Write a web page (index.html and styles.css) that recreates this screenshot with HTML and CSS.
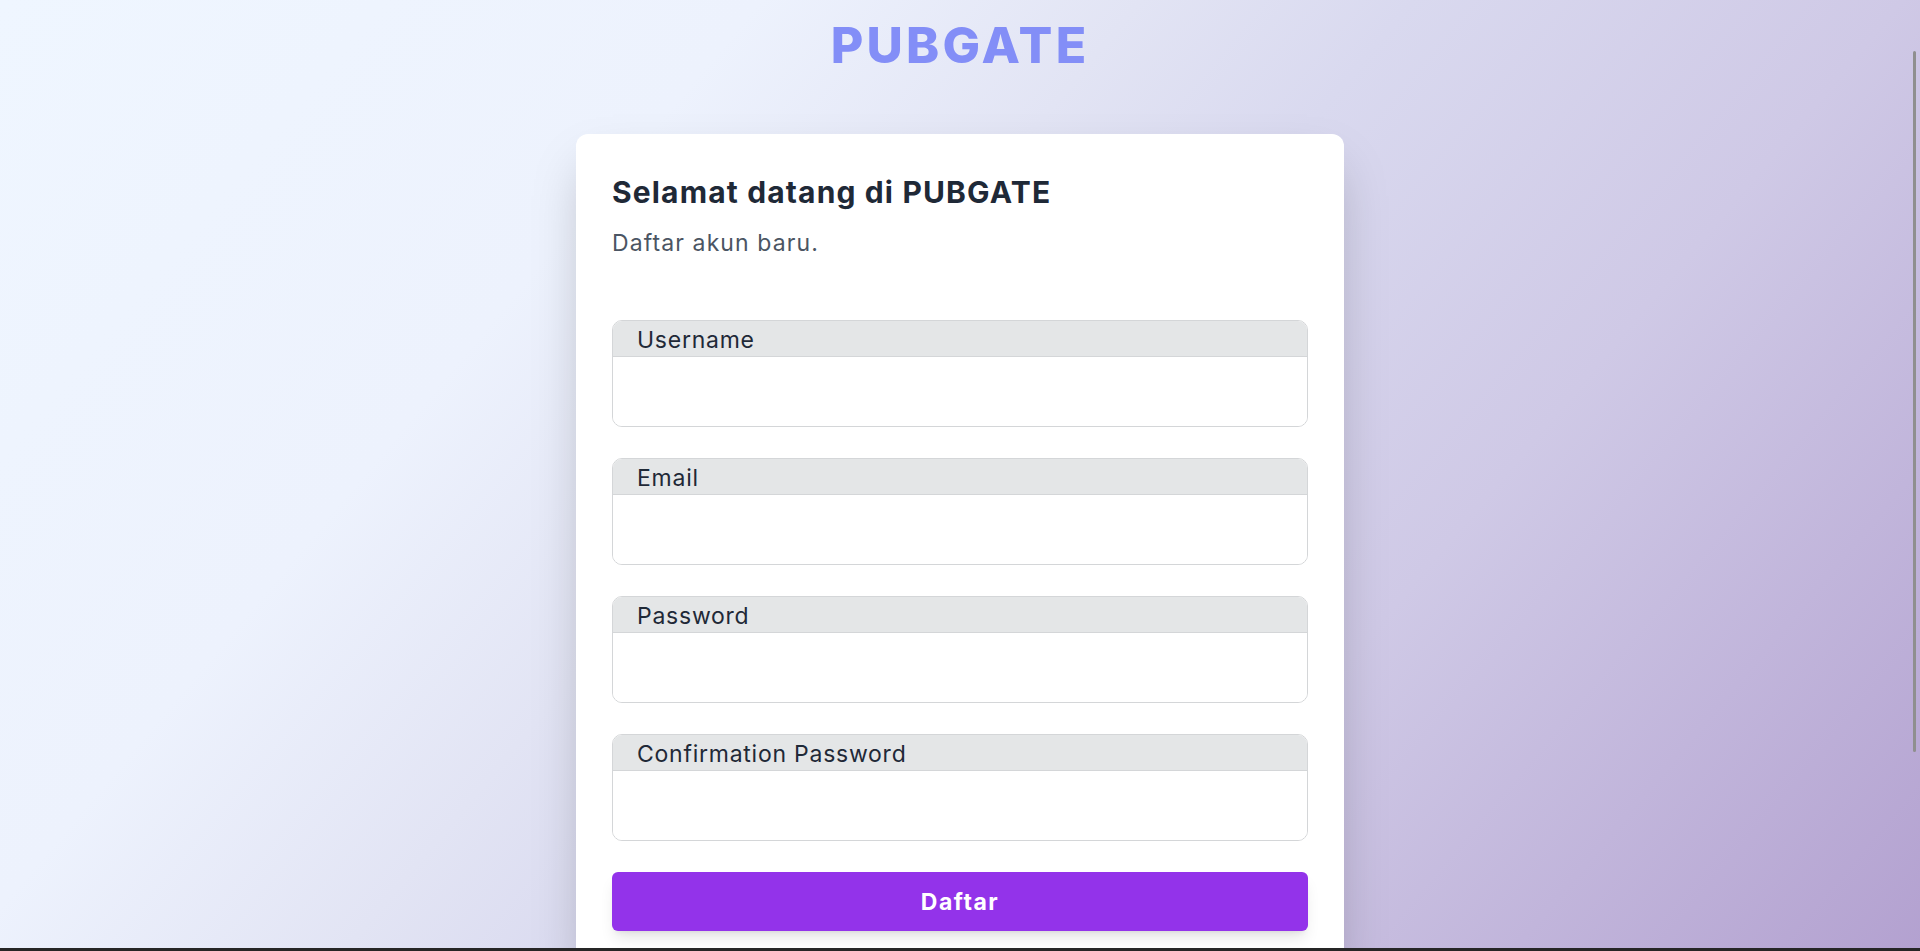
FILE: index.html
```html
<!DOCTYPE html>
<html lang="id">
<head>
<meta charset="utf-8">
<title>PUBGATE - Daftar</title>
<link rel="stylesheet" href="styles.css">
</head>
<body>
<header class="brand">
  <h1 class="brand-name">PUBGATE</h1>
</header>
<main class="card">
  <h2 class="card-title">Selamat datang di PUBGATE</h2>
  <p class="card-subtitle">Daftar akun baru.</p>
  <form class="form">
    <div class="field">
      <label class="field-label" for="username">Username</label>
      <input class="field-input" id="username" type="text">
    </div>
    <div class="field">
      <label class="field-label" for="email">Email</label>
      <input class="field-input" id="email" type="email">
    </div>
    <div class="field">
      <label class="field-label" for="password">Password</label>
      <input class="field-input" id="password" type="password">
    </div>
    <div class="field">
      <label class="field-label" for="confirm">Confirmation Password</label>
      <input class="field-input" id="confirm" type="password">
    </div>
    <button class="submit" type="button">Daftar</button>
  </form>
</main>
<div class="scroll-thumb"></div>
<div class="bottom-edge"></div>
</body>
</html>
```
FILE: styles.css
```css
html {
  scrollbar-width: none;
  background: linear-gradient(130deg, #eff6ff 0%, #edf2fd 28%, #e2e4f4 42%, #d9d9ef 52%, #cfc9e6 70%, #b3a1d0 100%) fixed;
  min-height: 100%;
}
html::-webkit-scrollbar { display: none; }

body {
  margin: 0;
  font-family: "Inter", "Noto Sans", sans-serif;
  color: #1f2937;
}

.brand {
  padding-top: 20px;
  display: flex;
  justify-content: center;
}
.brand-name {
  margin: 0;
  font-size: 50px;
  line-height: 50px;
  font-weight: 800;
  letter-spacing: 3.2px;
  color: #838ef7;
}

.card {
  width: 768px;
  box-sizing: border-box;
  margin: 64px auto 0;
  padding: 40px 36px 36px;
  background: #fff;
  border-radius: 12px;
  box-shadow: 0 25px 50px -12px rgba(0, 0, 0, 0.25);
}

.card-title {
  margin: 0;
  font-size: 30px;
  line-height: 36px;
  font-weight: 700;
  letter-spacing: 1.15px;
  color: #1f2937;
}
.card-subtitle {
  margin: 19px 0 0;
  font-size: 23px;
  line-height: 28px;
  letter-spacing: 1.1px;
  color: #4b5563;
}

.form {
  margin-top: 63px;
  display: flex;
  flex-direction: column;
}

.field {
  display: flex;
  flex-direction: column;
  border: 1px solid #d4d6d8;
  border-radius: 10px;
  overflow: hidden;
  margin-bottom: 31px;
}
.field-label {
  height: 35px;
  line-height: 38px;
  padding-left: 24px;
  background: #e4e6e7;
  border-bottom: 1px solid #d4d6d8;
  font-size: 23px;
  letter-spacing: 0.75px;
  color: #1f2937;
}
.field-input {
  height: 69px;
  border: none;
  outline: none;
  padding: 0 24px;
  font-size: 20px;
  background: #fff;
}

.submit {
  height: 59px;
  border: none;
  border-radius: 6px;
  background: #9333ea;
  color: #fff;
  font-family: inherit;
  font-size: 23px;
  font-weight: 700;
  letter-spacing: 1.5px;
  box-shadow: 0 10px 15px -3px rgba(0, 0, 0, 0.1), 0 4px 6px -4px rgba(0, 0, 0, 0.1);
  cursor: pointer;
}

.scroll-thumb {
  position: fixed;
  top: 51px;
  right: 4px;
  width: 3px;
  height: 701px;
  background: #8f8f8f;
  border-radius: 2px;
}
.bottom-edge {
  position: fixed;
  left: 0;
  right: 0;
  bottom: 0;
  height: 3px;
  background: #262626;
}
```
